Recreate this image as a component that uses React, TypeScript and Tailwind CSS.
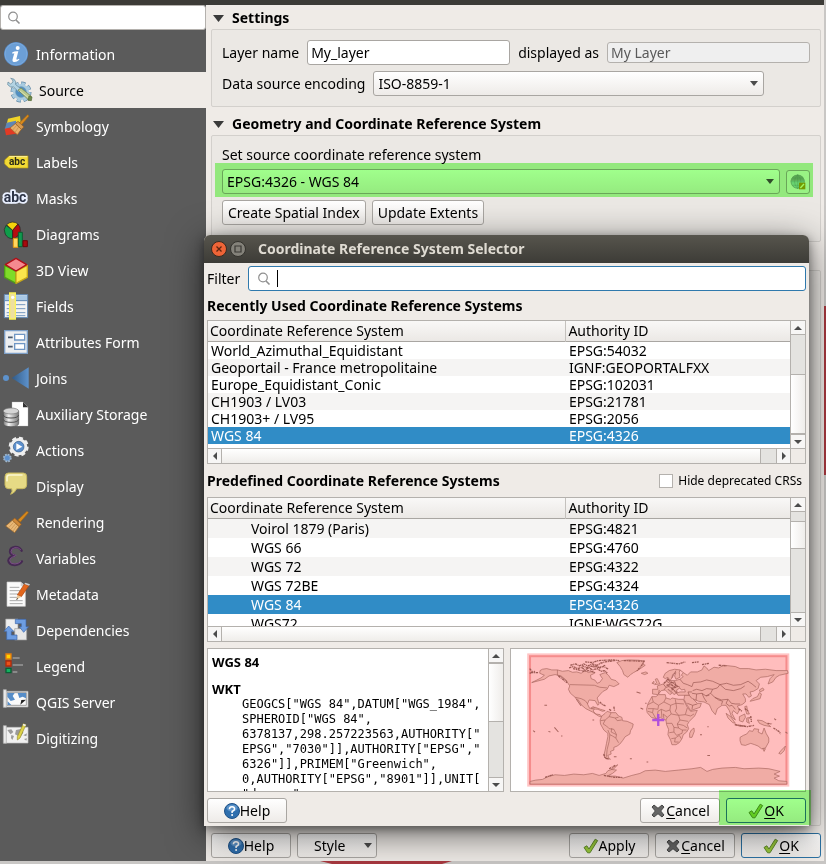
import { useState } from "react";
import type { ReactNode } from "react";
import { clsx } from "clsx";

type IconName =
  | "information" | "source" | "symbology" | "labels" | "masks" | "diagrams" | "view3d"
  | "fields" | "form" | "joins" | "storage" | "actions" | "display" | "rendering"
  | "variables" | "metadata" | "dependencies" | "legend" | "server" | "digitizing";

const NAV: { label: string; icon: IconName }[] = [
  { label: "Information", icon: "information" },
  { label: "Source", icon: "source" },
  { label: "Symbology", icon: "symbology" },
  { label: "Labels", icon: "labels" },
  { label: "Masks", icon: "masks" },
  { label: "Diagrams", icon: "diagrams" },
  { label: "3D View", icon: "view3d" },
  { label: "Fields", icon: "fields" },
  { label: "Attributes Form", icon: "form" },
  { label: "Joins", icon: "joins" },
  { label: "Auxiliary Storage", icon: "storage" },
  { label: "Actions", icon: "actions" },
  { label: "Display", icon: "display" },
  { label: "Rendering", icon: "rendering" },
  { label: "Variables", icon: "variables" },
  { label: "Metadata", icon: "metadata" },
  { label: "Dependencies", icon: "dependencies" },
  { label: "Legend", icon: "legend" },
  { label: "QGIS Server", icon: "server" },
  { label: "Digitizing", icon: "digitizing" },
];

const RECENT = [
  ["World_Azimuthal_Equidistant", "EPSG:54032"],
  ["Geoportail - France metropolitaine", "IGNF:GEOPORTALFXX"],
  ["Europe_Equidistant_Conic", "EPSG:102031"],
  ["CH1903 / LV03", "EPSG:21781"],
  ["CH1903+ / LV95", "EPSG:2056"],
  ["WGS 84", "EPSG:4326"],
];

const PREDEFINED = [
  ["Voirol 1879 (Paris)", "EPSG:4821"],
  ["WGS 66", "EPSG:4760"],
  ["WGS 72", "EPSG:4322"],
  ["WGS 72BE", "EPSG:4324"],
  ["WGS 84", "EPSG:4326"],
  ["WGS72", "IGNF:WGS72G"],
];

const WKT = `GEOGCS["WGS 84",DATUM["WGS_1984",
SPHEROID["WGS 84",
6378137,298.257223563,AUTHORITY["
EPSG","7030"]],AUTHORITY["EPSG","
6326"]],PRIMEM["Greenwich",
0,AUTHORITY["EPSG","8901"]],UNIT[
"degree"`;

function Broom() {
  return (
    <g strokeLinejoin="round">
      <path d="M69 4 73 8 49 36 42 30Z" fill="#d98a1e" stroke="#a8660f" strokeWidth="2" />
      <path d="M32 24 52 43 45 50 25 31Z" fill="#d08a3a" stroke="#96591a" strokeWidth="2" />
      <path d="M25 31 45 50 32 68 5 48Z" fill="#e8b877" stroke="#9a6222" strokeWidth="2" />
      <path d="M29 37 15 52M34 42 21 58M39 47 27 63" stroke="#c58b45" strokeWidth="2" fill="none" />
    </g>
  );
}

const ICONS: Record<IconName, ReactNode> = {
  information: (
    <>
      <circle cx="36" cy="36" r="36" fill="#5a8ecb" />
      <circle cx="36" cy="36" r="33" fill="#6c9fd6" stroke="#86b2e0" strokeWidth="2" />
      <circle cx="41" cy="18" r="6" fill="#fff" />
      <path d="M25 31Q34 26 43 28L37 51Q37 55 45 50L46 53Q37 62 29 60 23 58 27 47L31 34 25 35Z" fill="#fff" />
    </>
  ),
  source: (
    <>
      <circle cx="42" cy="42" r="25" fill="none" stroke="#5f87a5" strokeWidth="13" strokeDasharray="12 7.6" />
      <circle cx="42" cy="42" r="24" fill="#a8cbe0" />
      <circle cx="42" cy="42" r="25" fill="none" stroke="#a8cbe0" strokeWidth="9" strokeDasharray="10 9.6" strokeDashoffset="-1" />
      <circle cx="42" cy="42" r="16" fill="#4f8fc4" stroke="#6d95ad" strokeWidth="2" />
      <path d="M11 1Q23 1 26 11L26 20 44 34 36 43 20 27Q10 30 2 20L3 12 11 18 18 12 17 6Z" fill="#b3d3e3" stroke="#5f8397" strokeWidth="2" />
      <path d="M33 36 42 30 73 55 65 66Z" fill="#b9c88c" stroke="#6f7f4c" strokeWidth="2" />
      <path d="M38 38 67 61" stroke="#d9e4b4" strokeWidth="3" />
      <path d="M66 54 75 57 73 68 63 67Z" fill="#6c8a48" stroke="#4f6534" strokeWidth="2" />
    </>
  ),
  symbology: (
    <>
      <path d="M12 14 48 6 50 24 8 30Z" fill="#f0d428" />
      <path d="M8 26 36 20 38 42 2 46Z" fill="#5f86b5" />
      <path d="M2 44 30 38 46 58 6 64Z" fill="#e23a24" />
      <path d="M71 2 75 6 51 34 44 29Z" fill="#d98a1e" stroke="#a8660f" strokeWidth="2" />
      <path d="M42 22 60 39 52 46 34 29Z" fill="#d79a50" stroke="#96591a" strokeWidth="2" />
      <path d="M34 29 52 46 40 62 18 42Z" fill="#e6b06c" stroke="#9a6222" strokeWidth="2" />
      <path d="M38 34 26 48M44 39 33 55" stroke="#c58b45" strokeWidth="2" />
    </>
  ),
  labels: (
    <>
      <path d="M15 18H72V54H15L2 42V30Z" fill="#f2da35" stroke="#b89a10" strokeWidth="2" />
      <path d="M16 20H70" stroke="#fff2a0" strokeWidth="3" />
      <text x="15" y="45" fontSize="30" fontWeight="700" className="font-[Roboto,sans-serif]" fill="#2a2a18">abc</text>
    </>
  ),
  masks: (
    <text x="-1" y="47" fontSize="42" fontWeight="700" className="font-[Roboto,sans-serif]" fill="#2c3345" stroke="#eaf0ff" strokeWidth="11" strokeLinejoin="round" paintOrder="stroke">abc</text>
  ),
  diagrams: (
    <>
      <g stroke="#222" strokeWidth="2" strokeLinejoin="round">
        <path d="M26 25 6 10A25 25 0 0 0 26 50Z" fill="#0f9d4a" />
        <path d="M26 25 8 8A25 25 0 0 1 42 6Z" fill="#f5d20c" />
        <path d="M26 25 42 6Q50 14 49 26 47 44 26 50Z" fill="#b80c10" />
      </g>
      <path d="M28 49H42V76H28Z" fill="#ffd75e" stroke="#e59a10" strokeWidth="3" />
      <path d="M43 31H55V74H43Z" fill="#129a50" stroke="#0a5e30" strokeWidth="3" />
      <path d="M57 56H70V74H57Z" fill="#a80a0e" stroke="#6c0608" strokeWidth="3" />
    </>
  ),
  view3d: (
    <g strokeLinejoin="round" strokeWidth="4">
      <path d="M2 22 36 40V76L2 58Z" fill="#7fdc28" stroke="#4f9c18" />
      <path d="M70 22 36 40V76L70 58Z" fill="#fbe64c" stroke="#c8a818" />
      <path d="M36 1 68 20 36 39 4 20Z" fill="#f58a8f" stroke="#b01018" />
    </g>
  ),
  fields: (
    <>
      <path d="M1 2H71V71H1Z" fill="#f3f3f3" stroke="#5e86b4" strokeWidth="3" />
      <path d="M3 4H69V20H3Z" fill="#a9c8e6" />
      <path d="M2 20H70" stroke="#5e86b4" strokeWidth="3" />
      <path d="M8 32H64M8 44H64M8 56H64M8 65H64" stroke="#7698bf" strokeWidth="3" />
      <path d="M17-3H34V75H17Z" fill="#eedfa0" stroke="#fbf25a" strokeWidth="4" />
      <circle cx="26" cy="10" r="5" fill="#fff" />
    </>
  ),
  form: (
    <>
      <path d="M2 2H70V70H2Z" fill="#eceef0" stroke="#7ea0c8" strokeWidth="4" />
      <path d="M12 22H26M12 50H26" stroke="#47586c" strokeWidth="5" />
      <path d="M32 13H62V30H32ZM32 41H62V58H32Z" fill="#fff" stroke="#6f96c4" strokeWidth="4" />
    </>
  ),
  joins: (
    <>
      <defs>
        <linearGradient id="joinFill"><stop offset="0" stopColor="#315a86" /><stop offset="1" stopColor="#5d92cc" /></linearGradient>
      </defs>
      <circle cx="6" cy="36" r="9" fill="#5d92cc" />
      <path d="M23 36 74 4V68Z" fill="url(#joinFill)" />
    </>
  ),
  storage: (
    <>
      <defs>
        <linearGradient id="dbFill"><stop offset="0" stopColor="#777" /><stop offset=".35" stopColor="#f2f2f2" /><stop offset="1" stopColor="#777" /></linearGradient>
      </defs>
      <path d="M24 0H57L72 16V72H24Z" fill="#fff" stroke="#b9b9b9" />
      <path d="M57 0V16H72Z" fill="#333" />
      <path d="M-2 27V64Q-2 74 21 74T44 64V27Z" fill="url(#dbFill)" stroke="#555" strokeWidth="2" />
      <path d="M-2 39Q0 48 21 48T44 39M-2 52Q0 61 21 61T44 52" fill="none" stroke="#4f4f4f" strokeWidth="3" />
      <ellipse cx="21" cy="27" rx="23" ry="9" fill="#d5d5d5" stroke="#777" strokeWidth="2" />
    </>
  ),
  actions: (
    <>
      <circle cx="44" cy="26" r="24" fill="none" stroke="#eee" strokeWidth="12" strokeDasharray="11 7.85" />
      <circle cx="44" cy="26" r="21" fill="#5d90cd" stroke="#efefef" strokeWidth="10" />
      <circle cx="44" cy="26" r="16" fill="#5d90cd" stroke="#48688e" strokeWidth="2" />
      <path d="M37 16 55 26 37 36Z" fill="#fff" />
      <circle cx="10" cy="60" r="10" fill="none" stroke="#9fb8d0" strokeWidth="6" strokeDasharray="5 2.85" />
      <circle cx="10" cy="60" r="9" fill="#5d90cd" stroke="#9fb8d0" strokeWidth="2" />
    </>
  ),
  display: (
    <>
      <path d="M13-3H58Q68-3 68 8V33Q68 44 56 44H38Q33 56 20 61 27 51 23 44H14Q3 44 3 33V8Q3-3 13-3Z" fill="#e6da85" stroke="#c7b860" strokeWidth="3" />
      <path d="M9 20V10Q9 3 17 3H54" fill="none" stroke="#faf6cf" strokeWidth="5" strokeLinecap="round" />
    </>
  ),
  rendering: <Broom />,
  variables: (
    <>
      <path d="M53 14Q46 2 33 3 18 5 18 17 19 27 33 29 15 31 13 44 15 57 32 57 47 56 54 46" fill="none" stroke="#452a52" strokeWidth="7" strokeLinecap="round" />
      <path d="M50 11Q43 3 33 5 21 7 21 17 23 27 36 28M32 31Q18 34 17 44 19 55 33 54 44 53 50 47" fill="none" stroke="#7b4c86" strokeWidth="3" strokeLinecap="round" />
    </>
  ),
  metadata: (
    <>
      <path d="M9 0H50L64 12V73H9Z" fill="#fbfbfb" stroke="#ccc" strokeWidth="2" />
      <path d="M50 0V13H64Z" fill="#cfcfcf" />
      <path d="M17 16H46M17 26H48M17 36H42M17 46H40M17 56H56M17 65H56" stroke="#a9a9a9" strokeWidth="3" />
      <path d="M61 6 75 11 52 44 40 39Z" fill="#e2661c" stroke="#a9430e" strokeWidth="2" />
      <path d="M40 39 52 44 37 53Z" fill="#e8c79a" />
      <path d="M40 48 42 51 36 54Z" fill="#222" />
      <path d="M61 6 64 2 78 7 75 11Z" fill="#ccc" />
    </>
  ),
  dependencies: (
    <>
      <path d="M5 3H42V40H5Z" fill="#eee" stroke="#999" strokeWidth="2" />
      <path d="M32 32H68V66H32Z" fill="#e6e6e6" stroke="#999" strokeWidth="2" />
      <path d="M34 4H66V26H74L59 43 46 26H52V17H34Z" fill="#6d9de2" stroke="#3d65a8" strokeWidth="2" />
      <path d="M39 65H8V40H0L14 24 29 40H22V51H39Z" fill="#6d9de2" stroke="#3d65a8" strokeWidth="2" />
    </>
  ),
  legend: (
    <>
      <path d="M6 0H21V15H6Z" fill="#ffd200" stroke="#e87e0c" strokeWidth="4" />
      <path d="M6 21H21V36H6Z" fill="#e8521c" stroke="#b52a08" strokeWidth="4" />
      <path d="M6 43H21V56H6Z" fill="#12b060" stroke="#0a5f34" strokeWidth="4" />
      <path d="M26 12H47M26 33H57M26 54H40" stroke="#999" strokeWidth="5" />
    </>
  ),
  server: (
    <>
      <path d="M1 4H72V51H1Z" fill="#eee" stroke="#b5b5b5" strokeWidth="2" />
      <path d="M9 8H67V46H9Z" fill="#fafafa" stroke="#777" strokeWidth="2" />
      <path d="M10 9H32L26 18 33 29 20 33 10 20ZM41 9H66V25L56 20 46 24ZM11 34 22 45H11Z" fill="#568dc8" />
      <path d="M66 29 49 44 52 30Z" fill="#222" />
      <path d="M-2-1H7V52H-2Z" fill="#e9e9e9" stroke="#aaa" strokeWidth="2" />
    </>
  ),
  digitizing: (
    <>
      <path d="M1 4H72V51H1Z" fill="#f1f1f1" stroke="#c5c5c5" strokeWidth="2" />
      <path d="M10 12 22 10 28 18 20 25 16 20ZM22 27 30 30 25 42 21 36ZM36 12 54 8 58 20 47 35 39 28 33 25ZM58 28 69 22 67 31ZM60 39 69 37 67 44Z" fill="#9b9b9b" />
      <path d="M-2-1H7V52H-2Z" fill="#e9e9e9" stroke="#aaa" strokeWidth="2" />
      <path d="M58-7 66-4 48 36 40 42 40 32Z" fill="#ded34a" stroke="#99902a" strokeWidth="2" />
      <path d="M58-7 66-4 64 1 56-2Z" fill="#eee" />
    </>
  ),
};

function SearchIcon() {
  return (
    <svg viewBox="0 0 14 14" className="size-3.5 shrink-0" fill="none" stroke="#8f8f8f" aria-hidden="true">
      <circle cx="6" cy="5.5" r="4.3" strokeWidth="1.2" />
      <path d="M9 9 12.5 12.5" strokeWidth="1.6" />
    </svg>
  );
}

function HelpIcon() {
  return (
    <svg viewBox="0 0 16 16" className="size-4 shrink-0" aria-hidden="true">
      <circle cx="8" cy="8" r="7.5" fill="#2f6fae" stroke="#1f5288" />
      <ellipse cx="8" cy="5" rx="5.5" ry="3.5" fill="#6fa3d4" opacity=".7" />
      <path d="M5.4 6.2Q5.5 3.7 8 3.7T10.6 6Q10.6 7.3 8.1 8.5V10" fill="none" stroke="#fff" strokeWidth="1.5" />
      <circle cx="8.1" cy="12.1" r="1" fill="#fff" />
    </svg>
  );
}

function CheckIcon() {
  return (
    <svg viewBox="0 0 16 16" className="size-4 shrink-0" aria-hidden="true">
      <path d="M1 9.5 3.8 7.8 6 11 12.2 1.2 14.6 2.6 7 14.8H4.6Z" fill="#9bcb3c" stroke="#5f8a2a" strokeLinejoin="round" />
    </svg>
  );
}

function CrossIcon() {
  return (
    <svg viewBox="0 0 16 16" className="size-4 shrink-0" aria-hidden="true">
      <path d="M4 2 8 5.300 12 2 14 4 10.700 8 14 12 12 14 8 10.700 4 14 2 12 5.300 8 2 4Z" fill="#666" stroke="#484848" strokeLinejoin="round" />
    </svg>
  );
}

function Caret({ className }: { className?: string }) {
  return (
    <svg viewBox="0 0 8 5" className={clsx("h-[5px] w-2 shrink-0", className)} aria-hidden="true">
      <path d="M0 0H8L4 5Z" fill="#4c4c4c" />
    </svg>
  );
}

function Button({
  children,
  primary,
  className = "w-20",
}: {
  children: ReactNode;
  primary?: boolean;
  className?: string;
}) {
  return (
    <button
      type="button"
      className={clsx(
        "flex h-[25px] items-center justify-center rounded-[3px] border bg-linear-to-b from-white to-[#eeebe8] leading-5",
        primary ? "border-[#2c72a3]" : "border-[#a9a6a2]",
        className
      )}
    >
      {children}
    </button>
  );
}

// First letter carries the keyboard mnemonic
function Mnemonic({ text }: { text: string }) {
  return (
    <span>
      <span className="underline underline-offset-2">{text[0]}</span>
      {text.slice(1)}
    </span>
  );
}

function Highlight({ className }: { className: string }) {
  return <div className={clsx("pointer-events-none absolute bg-[#a0ff8c] mix-blend-multiply", className)} />;
}

function Select({ id, value, className }: { id: string; value: string; className: string }) {
  return (
    <div className={clsx("relative", className)}>
      <select
        id={id}
        className="h-[25px] w-full appearance-none rounded-[3px] border border-[#a9a6a2] bg-linear-to-b from-white to-[#eeebe8] px-1 leading-5 outline-none"
      >
        <option>{value}</option>
      </select>
      <Caret className="pointer-events-none absolute top-2.5 right-1.5" />
    </div>
  );
}

const ARROWS = {
  up: "M3 9H11L7 5Z",
  down: "M3 5H11L7 9Z",
  left: "M9 3V11L5 7Z",
  right: "M5 3V11L9 7Z",
};

function ArrowButton({ dir, className }: { dir: keyof typeof ARROWS; className: string }) {
  return (
    <button type="button" aria-label={`Scroll ${dir}`} className={clsx("size-3.5 shrink-0 bg-[#f7f6f5]", className)}>
      <svg viewBox="0 0 14 14" className="size-3.5">
        <path d={ARROWS[dir]} fill="#4c4c4c" />
      </svg>
    </button>
  );
}

function VScroll({ lead, thumb }: { lead: string; thumb: string }) {
  return (
    <div className="flex w-[15px] flex-col border-l border-[#b4b1ad] bg-[#e4e3e0]">
      <ArrowButton dir="up" className="border-b border-[#b4b1ad]" />
      <div className="flex flex-1 flex-col">
        <div className={lead} />
        <div className={clsx("border-y border-[#b4b1ad] bg-linear-to-r from-white to-[#efedea]", thumb)} />
      </div>
      <ArrowButton dir="down" className="border-t border-[#b4b1ad]" />
    </div>
  );
}

function HScroll() {
  return (
    <div className="flex h-[15px] border-t border-[#b4b1ad] bg-[#e4e3e0]">
      <ArrowButton dir="left" className="border-r border-[#b4b1ad]" />
      <div className="mr-[15px] flex-1 border-r border-[#b4b1ad] bg-linear-to-b from-white to-[#efedea]" />
      <ArrowButton dir="right" className="border-l border-[#b4b1ad]" />
    </div>
  );
}

function CrsTable({
  label,
  rows,
  selected,
  tree,
  lead,
  thumb,
}: {
  label: string;
  rows: string[][];
  selected: string;
  tree?: boolean;
  lead: string;
  thumb: string;
}) {
  return (
    <div className="grid grid-cols-[1fr_15px] border border-[#b4b1ad] bg-white">
      <div className={clsx("overflow-hidden", tree ? "h-32" : "h-[127px]")}>
        <table aria-label={label} className="w-full table-fixed border-collapse text-left">
          <thead>
            <tr className="h-5 border-b border-[#a9a6a2] bg-linear-to-b from-[#f9f8f7] to-[#ebe8e5] leading-5">
              <th className="w-[61.5%] border-r border-[#c4c1bd] p-0 pl-0.5 font-normal">Coordinate Reference System</th>
              <th className="p-0 pl-0.5 font-normal">Authority ID</th>
            </tr>
          </thead>
          <tbody>
            {rows.map(([name, id], i) => (
              <tr
                key={name}
                className={clsx(
                  tree ? "h-[19px] leading-[19px]" : "h-[17px] leading-[17px]",
                  name === selected
                    ? "bg-[#308cc6] text-white"
                    : (i % 2 === 1) !== Boolean(tree)
                      ? "bg-[#f5f4f3]"
                      : "bg-white"
                )}
              >
                <td className={clsx("p-0", tree ? "pl-[43px]" : "pl-[3px]")}>{name}</td>
                <td className="p-0 pl-[3px]">{id}</td>
              </tr>
            ))}
          </tbody>
        </table>
      </div>
      <VScroll lead={lead} thumb={thumb} />
      <HScroll />
      <div className="border-t border-l border-[#b4b1ad] bg-[#efebe7]" />
    </div>
  );
}

function WorldMap() {
  return (
    <svg viewBox="18 28 882 424" className="h-full w-full" role="img" aria-label="Extent of WGS 84">
      <rect x="70" y="44" width="778" height="392" fill="#ffbdbd" stroke="#ffc4c4" strokeWidth="7" />
      <rect x="75" y="49" width="768" height="382" fill="none" stroke="#f58c8c" strokeWidth="6" />
      <g fill="#f0aca5" stroke="#a8655e" strokeWidth="2" strokeLinejoin="round">
        {/* Americas */}
        <path d="M105 92 112 88 125 86 140 90 157 90 172 94 190 92 202 97 215 96 228 100 240 92 250 98 262 94 268 100 256 106 258 116 270 121 276 130 284 127 292 116 284 104 300 98 310 106 318 118 332 122 342 132 326 140 312 136 306 148 294 154 286 162 276 174 282 192 278 196 270 182 252 180 247 192 254 206 264 200 270 203 264 213 272 222 285 224 292 232 280 228 262 216 242 206 230 196 218 178 214 178 228 198 222 190 210 172 196 160 190 148 194 138 182 120 168 108 150 104 132 108 118 118 80 128 108 114 118 106 104 100Z" />
        <path d="M335 68 350 62 370 60 400 61 418 64 412 72 420 76 400 90 385 98 376 104 368 112 356 104 352 92 345 80Z" />
        <path d="M290 228 300 220 306 214 318 218 332 218 340 228 350 232 352 242 366 244 384 252 382 262 376 272 374 282 360 290 352 302 344 312 336 318 326 322 326 330 316 334 318 342 308 346 312 356 302 356 296 346 300 330 304 310 308 290 308 280 296 270 286 252 285 240Z" />
        {/* Africa */}
        <path d="M440 170 452 170 460 164 480 164 482 174 496 178 500 174 520 178 534 178 546 202 556 214 576 211 568 228 552 244 546 254 550 266 544 276 534 284 530 296 522 308 512 314 500 314 496 300 488 284 490 268 484 254 482 240 474 238 466 232 452 236 438 232 426 218 424 208 428 192Z" />
        <path d="M553 280 558 270 566 264 567 274 560 292 553 292Z" />
        {/* Eurasia */}
        <path d="M442 162 442 148 458 148 456 138 474 132 484 124 486 116 492 122 510 122 524 118 534 110 528 106 534 98 546 106 556 96 576 96 590 90 596 78 604 84 610 92 626 82 640 84 655 76 690 80 704 86 730 86 752 90 780 88 812 92 846 92 848 100 822 106 812 112 802 126 788 132 794 116 806 104 786 110 766 112 752 122 762 132 758 146 744 154 734 156 738 168 730 172 722 162 712 162 720 176 720 186 710 194 696 198 702 210 696 222 684 212 680 220 690 240 678 230 672 212 662 196 650 196 636 206 630 224 620 212 612 194 596 186 580 184 562 176 576 190 588 190 584 202 556 212 546 196 536 178 538 166 518 166 514 160 524 156 540 156 538 148 528 150 524 144 514 150 516 158 506 164 500 156 488 148 500 160 494 164 480 150 468 152 458 164Z" />
        <path d="M474 112 480 100 492 92 508 88 524 90 522 98 524 112 512 118 508 108 512 98 502 104 500 114 494 122 488 112 480 116Z" />
        <path d="M448 134 454 128 450 118 456 116 464 132ZM440 130 446 124 446 132ZM408 100 422 96 428 100 418 104Z" />
        {/* Pacific */}
        <path d="M704 292 714 286 724 282 732 272 742 274 746 266 760 268 758 276 770 282 776 264 782 280 790 294 790 306 780 324 768 326 758 318 748 314 736 310 720 316 708 314 704 302Z" />
        <path d="M702 230 718 222 720 232 712 246 702 242ZM662 220 676 230 690 250 682 248 668 234ZM690 254 704 256 718 258 704 259ZM756 240 770 242 784 250 796 260 776 256 762 250ZM724 234 736 232 728 238 732 250 724 246Z" />
        <path d="M734 184 742 176 756 170 762 158 768 162 764 176 750 180ZM762 150 772 144 776 150 764 156ZM718 200 724 198 726 210 732 222 724 222ZM820 340 828 330 840 318 836 332 826 342ZM772 326 780 326 776 334Z" />
        <path d="M258 206 270 202 286 208 300 212 292 214 278 208Z" />
        {/* Antarctica */}
        <path d="M75 432 75 424 92 420 112 418 128 410 150 404 178 406 206 402 236 404 262 400 282 406 302 400 308 392 326 386 338 374 326 380 318 388 334 390 322 400 306 408 330 408 354 414 380 406 404 400 420 392 450 390 480 394 520 390 560 386 586 382 605 394 622 388 650 384 690 382 716 386 760 384 790 386 824 394 806 402 822 408 806 414 820 422 844 424 844 432Z" />
      </g>
      {/* Borders */}
      <path
        d="M157 90V106L168 110 186 124M194 134 268 136 284 142 306 144M210 172 228 176 240 182 248 192M318 218 312 230 300 240 294 252M312 230 330 234 340 232M294 252 304 258 312 266 326 268 334 284 332 294 340 308M308 270 314 284 312 304 306 328 304 350M330 234 336 242 350 240M286 242 300 240M320 264 318 276 334 284M332 294 322 288 314 284"
        fill="none" stroke="#a8655e" strokeWidth="2"
      />
      <path
        d="M440 170 444 186 428 194M444 186 460 196 476 186 482 174M460 196 458 208 444 206 428 206M476 186 496 196 512 190 510 178M512 190 536 192M496 196 494 210 482 214 468 208 458 214M512 190 514 204 510 214 520 226 540 224 546 204M540 224 556 228 566 222M494 210 498 222 486 232 482 240M498 222 520 226 524 240 516 252 520 264 506 262 500 250 484 250M524 240 548 244M516 252 534 256 546 264M520 264 530 270 544 270M506 262 506 276 492 278M506 276 514 286 530 280 532 270M498 296 510 294 522 286 528 296M510 294 508 306 520 306M468 208 470 232M458 214 456 234M444 206 442 218 452 236M486 232 474 222 476 236M428 214 442 218"
        fill="none" stroke="#a8655e" strokeWidth="2"
      />
      <path
        d="M462 150 460 162M474 132 482 142 476 150M484 124 494 130 490 140 502 144 512 136 508 124M512 136 524 142M494 130 508 126M502 144 500 152M490 140 482 142M524 118 534 130 546 134 560 140 564 128 586 126 604 120 622 124 644 134 636 144 622 148 604 146 590 152 574 148 562 152M644 134 664 130 684 136 706 134 728 124 740 132 752 142M644 134 660 148 684 152 706 146 718 138M622 148 616 160 628 172 648 180 668 178 678 190 690 192 704 192M560 160 574 162 590 160 602 168 616 160M574 162 572 182M590 160 596 174 604 186M602 168 612 166M538 166 552 166 560 176M552 166 548 156 560 156M546 190 562 196 576 192M562 196 560 208M668 178 662 190 672 198 680 196 690 208M628 172 640 180 652 184 648 194M500 114 512 92M524 90 534 98"
        fill="none" stroke="#985650" strokeWidth="2"
      />
      {/* Arctic islands, fjords and small archipelagos */}
      <path
        d="M192 84 204 80 218 86 230 82 238 90 252 84 262 90 276 86 288 94 300 92 306 100M196 76 212 72 222 78 236 72 248 78 262 72 276 76 286 70 300 66 330 62M240 66 262 68 280 62 320 60 342 62M262 80 280 82 296 80 310 88M204 86 220 90 236 94 252 92 270 98M230 77 248 84 266 76 284 84 300 76M356 62 416 64 410 76 394 94M74 86 84 98M78 98 100 98M74 100 90 94M160 108 186 128M296 342 300 354 316 358M484 68 520 72 540 66M560 68 580 66M590 74 612 70M640 76 664 78M476 130 488 118 496 126 506 130 516 140 500 146 514 158M484 136 498 134 510 142M700 206 710 214M718 206 730 214M688 254 726 260 746 256M786 250 800 252M804 264 820 274 826 282M736 228 738 246M284 186 292 194 302 198M312 208 318 212M326 200 328 212M296 406 330 412 352 412M312 386 330 376M120 412 144 404"
        fill="none" stroke="#9d5a54" strokeWidth="4" strokeDasharray="7 2 3 2"
      />
      <path
        d="M118 196H126M262 240H267M148 262 160 276M84 272 90 276M130 274 136 276M168 288H172M394 156 406 160M406 204 414 208M606 346H614M584 284H590M374 356H380M424 366H429M326 350H334M420 190H424M806 236 812 240M840 276 846 280M606 260H610"
        fill="none" stroke="#a8655e" strokeWidth="3"
      />
      <path d="M441 240H477M459 222V258" stroke="#b050dc" strokeWidth="7" />
    </svg>
  );
}

function Sidebar() {
  const [active, setActive] = useState("Source");
  return (
    <aside className="bg-[#5b5b5b] text-white">
      <label className="mb-1.5 flex h-[25px] items-center gap-2 rounded-[3px] border border-[#b4b1ad] bg-white px-1.5">
        <SearchIcon />
        <input type="search" aria-label="Search options" className="min-w-0 flex-1 text-black outline-none" />
      </label>
      <nav>
        {NAV.map(({ label, icon }) => (
          <button
            key={label}
            type="button"
            onClick={() => setActive(label)}
            className={clsx(
              "flex h-9 w-full items-center gap-2 text-left",
              active === label ? "bg-[#efebe7] pl-[7px] text-black" : "pl-1"
            )}
          >
            <svg viewBox="0 0 72 72" className="size-6 shrink-0 overflow-visible" aria-hidden="true">
              {ICONS[icon]}
            </svg>
            <span className="pt-0.5">{label}</span>
          </button>
        ))}
      </nav>
    </aside>
  );
}

function SectionTitle({ children }: { children: ReactNode }) {
  return (
    <h2 className="flex h-6 items-center gap-2 pt-0.5 pl-0.5 font-bold">
      <svg viewBox="0 0 11 7" className="h-[7px] w-[11px]" aria-hidden="true">
        <path d="M0 0H11L5.500 7Z" fill="#3a3a3a" />
      </svg>
      {children}
    </h2>
  );
}

function LayerSettings() {
  return (
    <main className="flex flex-col bg-[#efebe7] pr-[3px] pb-[3px] pl-[5px]">
      <SectionTitle>Settings</SectionTitle>
      <section className="flex flex-col gap-1.5 rounded-xs border border-[#d3d0cc] bg-[#ebe8e4] p-2.5">
        <div className="flex items-center gap-2">
          <label htmlFor="layer-name">Layer name</label>
          <input
            id="layer-name"
            defaultValue="My_layer"
            className="h-[25px] min-w-0 flex-1 rounded-[3px] border border-[#a9a6a2] bg-white px-[3px] outline-none"
          />
          <label htmlFor="display-name">displayed as</label>
          <input
            id="display-name"
            readOnly
            value="My Layer"
            className="h-[21px] min-w-0 flex-1 rounded-[3px] border border-[#b4b1ad] bg-[#efefef] px-[3px] text-[#5a5a5a] outline-none"
          />
        </div>
        <div className="flex items-center gap-2">
          <label htmlFor="encoding">Data source encoding</label>
          <Select id="encoding" value="ISO-8859-1" className="w-[391px]" />
        </div>
      </section>

      <div className="mt-1">
        <SectionTitle>Geometry and Coordinate Reference System</SectionTitle>
      </div>
      <section className="flex flex-col gap-1.5 rounded-xs border border-[#d3d0cc] bg-[#ebe8e4] p-2.5 pb-4">
        <label htmlFor="crs" className="leading-[17px]">Set source coordinate reference system</label>
        <div className="relative flex items-center gap-1.5">
          <Select id="crs" value="EPSG:4326 - WGS 84" className="flex-1" />
          <button
            type="button"
            aria-label="Select CRS"
            className="flex size-6 items-center justify-center rounded-[3px] border border-[#a9a6a2] bg-[#f4f2f0]"
          >
            <svg viewBox="0 0 48 48" className="size-4" aria-hidden="true">
              <circle cx="23" cy="23" r="20" fill="#a5d3cb" stroke="#7d9a90" strokeWidth="2" />
              <path d="M2 20H44Q40 2 23 2T2 20Z" fill="#93a898" />
              <path d="M2 23H44M7 12H39M7 34H39M23 2V44M23 2Q4 23 23 44M23 2Q42 23 23 44" fill="none" stroke="#668c7d" strokeWidth="1" />
              <path d="M27 26H46V46H27Z" fill="#b89a00" />
              <path d="M31 42 42 30" stroke="#fff8b0" strokeWidth="4" />
            </svg>
          </button>
          <Highlight className="-top-1.5 -right-[3px] -bottom-[3px] -left-[7px]" />
        </div>
        <div className="flex gap-1.5">
          <Button className="px-[5px]">Create Spatial Index</Button>
          <Button className="px-[5px]">Update Extents</Button>
        </div>
      </section>

      <section className="mt-7 flex-1 rounded-xs border border-[#d3d0cc] bg-[#ebe8e4]" />

      <footer className="mt-[7px] flex gap-1.5">
        <Button><HelpIcon />Help</Button>
        <Button className="w-20 pl-4">
          <span className="flex-1 text-left">Style</span>
          <Caret className="mr-1" />
        </Button>
        <div className="flex-1" />
        <Button><CheckIcon />Apply</Button>
        <Button><CrossIcon /><Mnemonic text="Cancel" /></Button>
        <Button primary><CheckIcon /><Mnemonic text="OK" /></Button>
      </footer>
    </main>
  );
}

function CrsDialog() {
  return (
    <div
      role="dialog"
      aria-label="Coordinate Reference System Selector"
      className="absolute top-[235px] right-[17px] left-[204px] rounded-t-md bg-[#efebe7] shadow-[0_8px_36px_rgba(0,0,0,0.6),0_3px_10px_rgba(0,0,0,0.4)]"
    >
      <header className="flex h-7 items-center rounded-t-md bg-linear-to-b from-[#57554d] to-[#3d3c37] pl-[7px] font-bold text-[#dfdbd2]">
        <button type="button" aria-label="Close" className="mr-[3px]">
          <svg viewBox="0 0 16 16" className="size-4">
            <circle cx="8" cy="8" r="7.500" fill="#ee6437" stroke="#3a2a20" />
            <path d="M5.500 5.500 10.500 10.500M10.500 5.500 5.500 10.500" stroke="#5c2410" strokeWidth="1.300" />
          </svg>
        </button>
        <button type="button" aria-label="Maximize" className="mr-3">
          <svg viewBox="0 0 16 16" className="size-4">
            <circle cx="8" cy="8" r="7.500" fill="#84827a" stroke="#33322d" />
            <path d="M5 5H11V11H5Z" fill="none" stroke="#3a3934" strokeWidth="1.200" />
          </svg>
        </button>
        Coordinate Reference System Selector
      </header>

      <div className="p-[3px]">
        <div className="flex items-center gap-2">
          <label htmlFor="filter">Filter</label>
          <div className="flex h-[25px] flex-1 items-center gap-1.5 rounded-[3px] border border-[#2f79ad] bg-white pl-2">
            <SearchIcon />
            <span className="h-[17px] w-px bg-black" />
            <input id="filter" className="min-w-0 flex-1 outline-none" />
          </div>
        </div>

        <h3 className="flex h-[29px] items-center font-bold">Recently Used Coordinate Reference Systems</h3>
        <CrsTable
          label="Recently used coordinate reference systems"
          rows={RECENT}
          selected="WGS 84"
          lead="h-[39px]"
          thumb="flex-1"
        />

        <div className="flex h-[33px] items-center justify-between">
          <h3 className="font-bold">Predefined Coordinate Reference Systems</h3>
          <label className="flex items-center gap-[5px] pr-1 text-xs">
            <input type="checkbox" className="size-3.5 appearance-none border border-[#b4b1ad] bg-white checked:bg-[#308cc6]" />
            Hide deprecated CRSs
          </label>
        </div>
        <CrsTable
          label="Predefined coordinate reference systems"
          rows={PREDEFINED}
          selected="WGS 84"
          tree
          lead="h-[9px]"
          thumb="h-7"
        />

        <div className="mt-1.5 grid h-36 grid-cols-2 gap-1.5">
          <div className="flex overflow-hidden border border-[#b4b1ad] bg-white">
            <div className="min-w-0 flex-1 overflow-hidden pt-1 pl-1 text-[13px]">
              <p className="leading-[18px] font-bold">WGS 84</p>
              <p className="mt-2.5 leading-4 font-bold">WKT</p>
              <pre className="pl-[30px] font-['DejaVu_Sans_Mono',monospace] text-xs leading-[15px]">{WKT}</pre>
            </div>
            <VScroll lead="h-0" thumb="h-[59px]" />
          </div>
          <div className="overflow-hidden border border-[#b4b1ad] bg-white">
            <WorldMap />
          </div>
        </div>

        <footer className="mt-1.5 flex gap-1.5">
          <Button><HelpIcon />Help</Button>
          <div className="flex-1" />
          <Button><CrossIcon /><Mnemonic text="Cancel" /></Button>
          <div className="relative">
            <Button primary><CheckIcon /><Mnemonic text="OK" /></Button>
            <Highlight className="-top-2 -right-[5px] -bottom-0.5 -left-[7px]" />
          </div>
        </footer>
      </div>
    </div>
  );
}

export default function App() {
  return (
    <div className="relative flex min-h-screen flex-col bg-[#c9c7c5] font-['Noto_Sans',sans-serif] text-sm text-black">
      <div className="mr-0.5 h-[5px] bg-[#3c3b37]" />
      <div className="flex flex-1">
        <div className="grid flex-1 grid-cols-[206px_1fr]">
          <Sidebar />
          <LayerSettings />
        </div>
        <div className="w-0.5 pt-[301px]">
          <div className="h-[169px] bg-[#a8383f]" />
        </div>
      </div>
      <div className="flex h-[3px] pl-80">
        <svg viewBox="0 0 132 3" className="h-[3px] w-[132px]" aria-hidden="true">
          <path d="M0 0H132L122 3H12Z" fill="#a8383f" />
        </svg>
      </div>
      <CrsDialog />
    </div>
  );
}
